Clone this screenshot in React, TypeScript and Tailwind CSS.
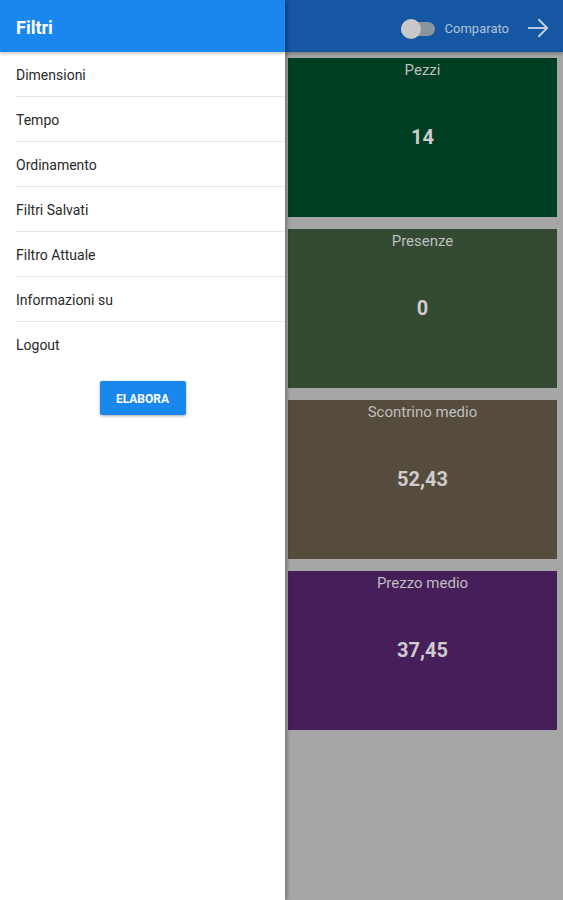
import React from "react";

const items = ["Dimensioni", "Tempo", "Ordinamento", "Filtri Salvati", "Filtro Attuale", "Informazioni su", "Logout"];

const cards = [
  { title: "Pezzi", value: "14", bg: "bg-[#003e22]" },
  { title: "Presenze", value: "0", bg: "bg-[#344a33]" },
  { title: "Scontrino medio", value: "52,43", bg: "bg-[#564c3e]" },
  { title: "Prezzo medio", value: "37,45", bg: "bg-[#461e5a]" },
];

export default function App() {
  return (
    <div className="flex h-[900px] w-[563px] overflow-hidden bg-[#a6a6a6]" style={{ fontFamily: "Roboto, 'Liberation Sans', sans-serif" }}>
      {/* Drawer */}
      <div className="relative z-10 flex w-[285px] shrink-0 flex-col bg-white shadow-[2px_0_4px_rgba(0,0,0,0.3)]">
        <div className="flex h-[52px] items-center bg-[#1a87ef] pl-4 pt-[2px] shadow-[0_2px_3px_rgba(0,0,0,0.2)]">
          <span className="text-[18px] font-bold text-white">Filtri</span>
        </div>
        <div className="flex flex-col">
          {items.map((it, i) => (
            <div
              key={it}
              className={`ml-4 flex h-[45px] items-center pt-[2px] text-[14px] text-[#2a2a2a] ${i < items.length - 1 ? "border-b border-[#e6e6e6]" : ""}`}
            >
              {it}
            </div>
          ))}
        </div>
        <div className="mt-[14px] flex justify-center">
          <button className="h-[34px] w-[86px] rounded-[2px] bg-[#1a87ef] pt-[1px] text-[12px] font-bold text-white shadow-[0_1px_3px_rgba(0,0,0,0.35)]">
            ELABORA
          </button>
        </div>
      </div>

      {/* Dimmed content */}
      <div className="flex min-w-0 flex-1 flex-col">
        <div className="flex h-[52px] items-center justify-end bg-[#1557a3] pr-[14px] pt-[5px] shadow-[0_2px_3px_rgba(0,0,0,0.25)]">
          <div className="relative mr-[10px] h-[14px] w-[34px] rounded-full bg-[#8c949e]">
            <div className="absolute -top-[3px] left-0 h-[20px] w-[20px] rounded-full bg-[#c8c8c8]" />
          </div>
          <span className="mr-[18px] text-[13px] text-[#b4c2d8]">Comparato</span>
          <svg width="22" height="22" viewBox="0 0 24 24" fill="none" stroke="#bccbe2" strokeWidth="2.2" strokeLinecap="round" strokeLinejoin="round" className="-mt-[2px]">
            <path d="M2 12h20M13 3l9 9-9 9" />
          </svg>
        </div>
        <div className="flex flex-col gap-[12px] pl-[3px] pr-[6px] pt-[6px]">
          {cards.map((c) => (
            <div key={c.title} className={`flex h-[159px] flex-col items-center ${c.bg}`}>
              <div className="mt-[1px] text-[15px] text-[#bfbfbf]">{c.title}</div>
              <div className="mt-[40px] text-[20px] font-bold text-[#cdcdcd]">{c.value}</div>
            </div>
          ))}
        </div>
      </div>
    </div>
  );
}
